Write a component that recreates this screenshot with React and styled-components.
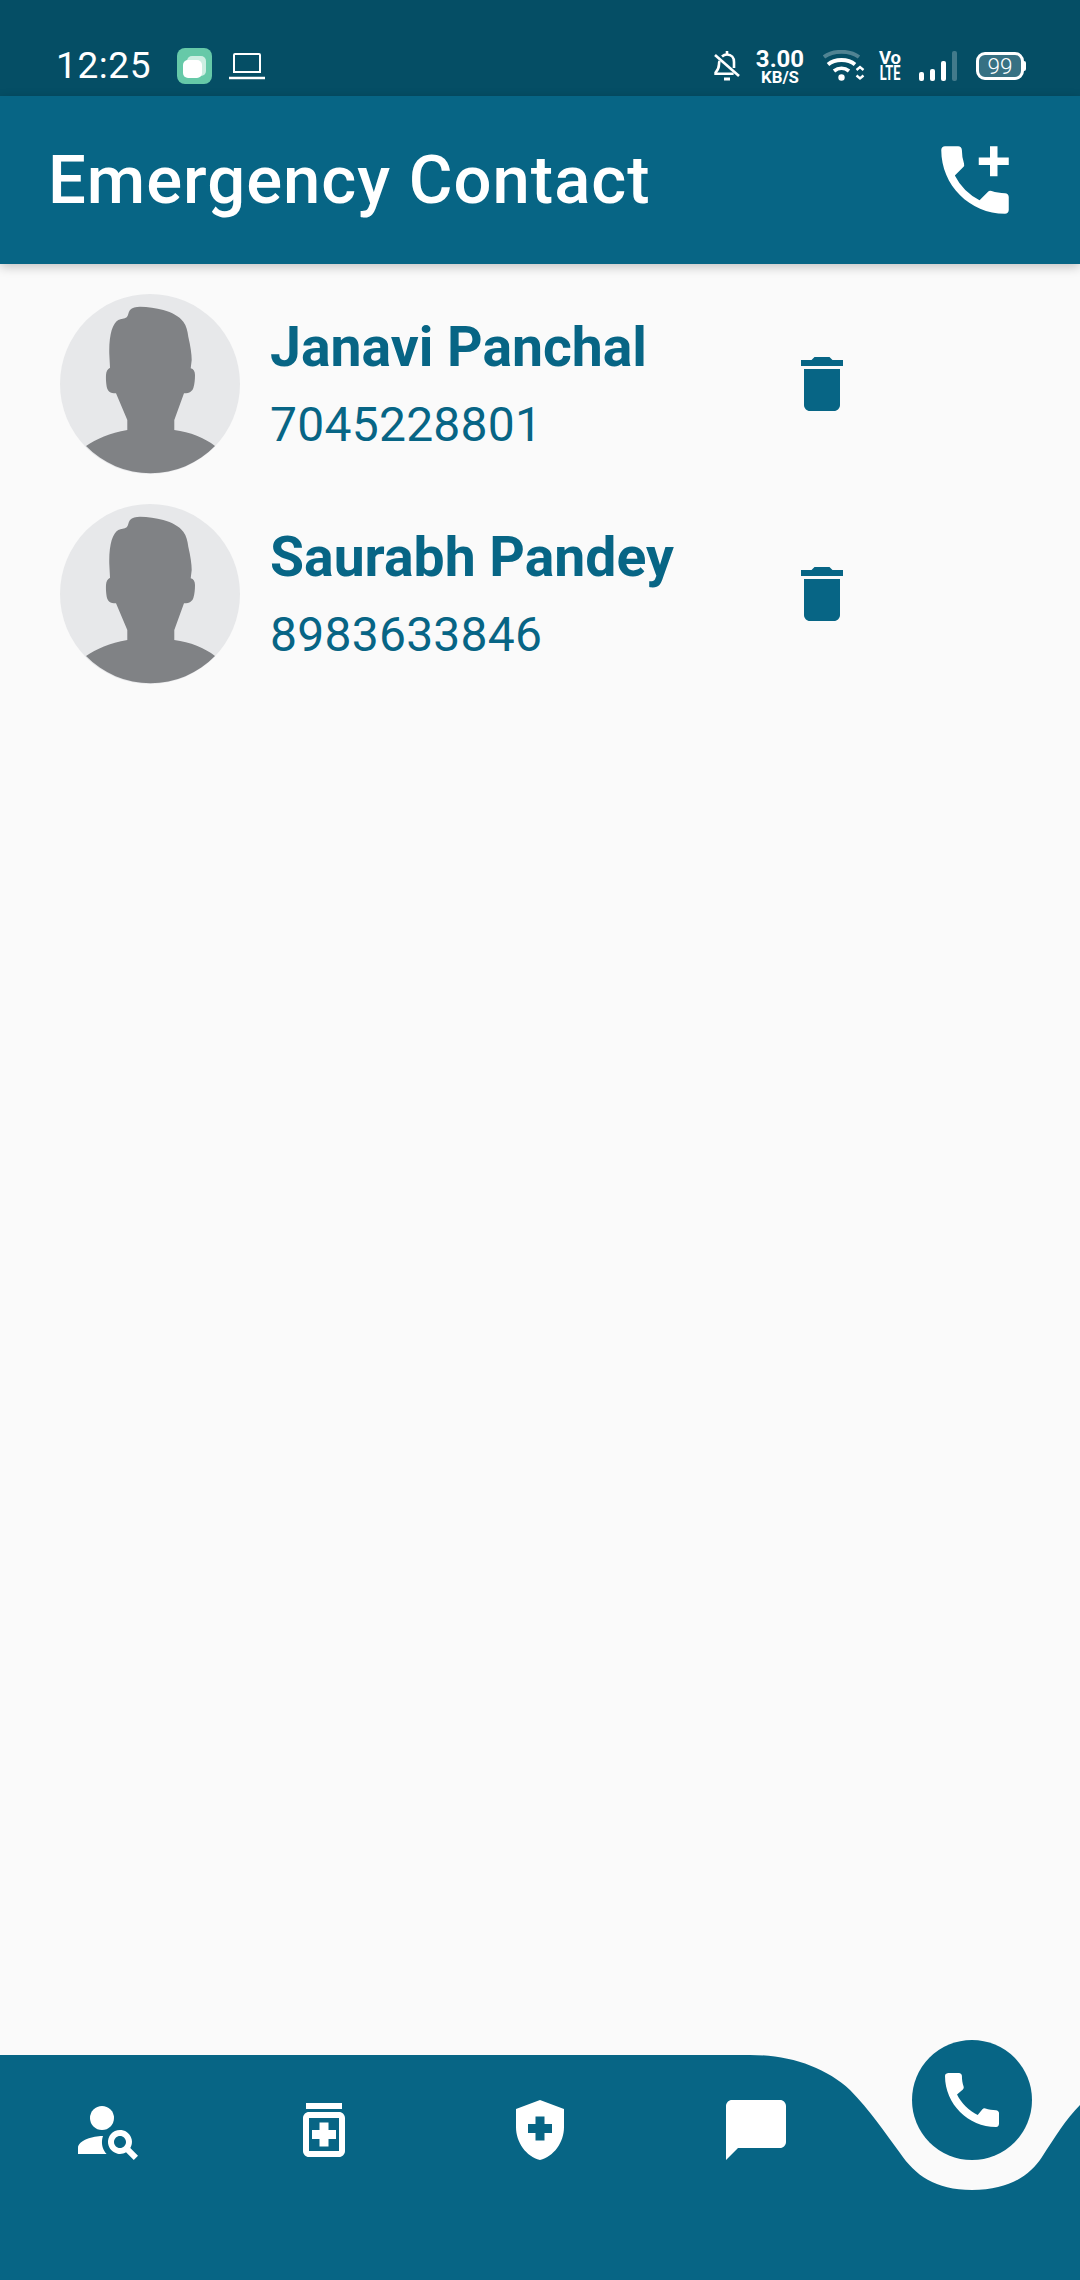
import React from 'react';
import styled, { createGlobalStyle } from 'styled-components';
import {
  MdAddIcCall,
  MdCall,
  MdChatBubble,
  MdDelete,
  MdHealthAndSafety,
  MdOutlineMedication,
} from 'react-icons/md';

const BRAND = '#076585';
const BRAND_DARK = '#054e65';

const GlobalStyle = createGlobalStyle`
  html, body {
    margin: 0;
    padding: 0;
    background: #fafafa;
  }
  * {
    box-sizing: border-box;
  }
`;

const Page = styled.div`
  width: 1080px;
  height: 2280px;
  display: flex;
  flex-direction: column;
  overflow: hidden;
  background: #fafafa;
  font-family: Roboto, "Liberation Sans", sans-serif;
`;

const StatusBar = styled.div`
  height: 96px;
  flex: none;
  display: flex;
  align-items: flex-start;
  justify-content: space-between;
  padding: 48px 56px 0 56px;
  background: ${BRAND_DARK};
  color: #fff;
`;

const StatusGroup = styled.div`
  display: flex;
  align-items: center;
  height: 36px;
`;

const Clock = styled.span`
  font-size: 37px;
  line-height: 38px;
  font-weight: 400;
  width: 121px;
  letter-spacing: 0.6px;
`;

const StatusIcon = styled.svg`
  display: block;
  flex: none;
  margin-left: ${(p) => p.$left || 0}px;
`;

const Speed = styled.div`
  width: 48px;
  margin-left: 16px;
  display: flex;
  flex-direction: column;
  align-items: center;
  font-weight: 700;
`;

const SpeedValue = styled.span`
  font-size: 24px;
  line-height: 22px;
`;

const SpeedUnit = styled.span`
  font-size: 16.8px;
  line-height: 15px;
`;

const Volte = styled.div`
  width: 22px;
  margin-left: 14px;
  display: flex;
  flex-direction: column;
  align-items: center;
  font-weight: 700;
`;

const VolteLine = styled.span`
  font-size: ${(p) => p.$size}px;
  line-height: 15px;
  transform: scaleX(${(p) => p.$squeeze});
`;

const Battery = styled.div`
  position: relative;
  width: 48px;
  height: 28px;
  margin-left: 19px;
  display: flex;
  align-items: center;
  justify-content: center;
  border: 3px solid #fff;
  border-radius: 9px;
  background: rgba(255, 255, 255, 0.2);
  font-size: 22.5px;
  font-weight: 300;
  line-height: 1;

  &::after {
    content: '';
    position: absolute;
    right: -5px;
    top: 6px;
    width: 2px;
    height: 10px;
    border-radius: 0 2px 2px 0;
    background: #fff;
  }
`;

const AppBar = styled.header`
  position: relative;
  z-index: 1;
  height: 168px;
  flex: none;
  display: flex;
  align-items: center;
  justify-content: space-between;
  padding: 0 60px 0 48px;
  background: ${BRAND};
  box-shadow: 0 3px 10px rgba(0, 0, 0, 0.22);
  color: #fff;
`;

const Title = styled.h1`
  margin: 0;
  font-size: 67px;
  line-height: 78px;
  font-weight: 500;
  letter-spacing: 1px;
`;

const ContactList = styled.main`
  flex: 1;
  display: flex;
  flex-direction: column;
  gap: 30px;
  padding: 30px 0 0 60px;
`;

const ContactRow = styled.div`
  display: flex;
  align-items: center;
  height: 180px;
`;

const Avatar = styled.svg`
  display: block;
  flex: none;
  width: 180px;
  height: 180px;
`;

const ContactText = styled.div`
  width: 516px;
  margin-left: 30px;
  display: flex;
  flex-direction: column;
  color: ${BRAND};
`;

const ContactName = styled.span`
  font-size: 55.3px;
  line-height: 66px;
  font-weight: 700;
`;

const ContactPhone = styled.span`
  margin-top: 16px;
  font-size: 48px;
  line-height: 56px;
  font-weight: 400;
  letter-spacing: 0.25px;
`;

const TrashIcon = styled(MdDelete)`
  display: block;
  flex: none;
  color: ${BRAND};
`;

const BottomNav = styled.nav`
  position: relative;
  height: 225px;
  flex: none;
  display: flex;
  align-items: flex-start;
  gap: 144px;
  padding: 39px 0 0 72px;
  color: #fff;
`;

const NavWave = styled.svg`
  position: absolute;
  left: 0;
  top: 0;
  width: 1080px;
  height: 225px;
`;

const NavItem = styled.span`
  position: relative;
  display: block;
  width: 72px;
  height: 72px;
`;

const CallButton = styled.button`
  position: absolute;
  left: 912px;
  top: -15px;
  width: 120px;
  height: 120px;
  padding: 0;
  display: flex;
  align-items: center;
  justify-content: center;
  border: 0;
  border-radius: 50%;
  background: ${BRAND};
  color: #fff;
`;

const contacts = [
  { name: 'Janavi Panchal', phone: '7045228801' },
  { name: 'Saurabh Pandey', phone: '8983633846' },
];

// person_search with the square handle of the reference
const PersonSearchIcon = ({ size }) => (
  <svg width={size} height={size} viewBox="0 0 24 24" fill="currentColor">
    <circle cx="10" cy="8" r="4" />
    <path d="M10.35 14.01C7.62 13.91 2 15.27 2 18v2h9.54c-2.47-2.76-1.23-5.92-1.19-5.99z" />
    <path d="M19.43 18.02c.47-.8.7-1.77.48-2.82-.34-1.64-1.72-2.95-3.38-3.16-2.63-.34-4.85 1.87-4.5 4.5.22 1.66 1.52 3.04 3.16 3.38 1.05.22 2.02-.01 2.82-.48L20.59 22 22 20.59l-2.57-2.57zM16 18c-1.1 0-2-.9-2-2s.9-2 2-2 2 .9 2 2-.9 2-2 2z" />
  </svg>
);

const navIcons = [PersonSearchIcon, MdOutlineMedication, MdHealthAndSafety, MdChatBubble];

const AppBadge = () => (
  <StatusIcon width="35" height="36" viewBox="0 0 35 36">
    <rect width="35" height="36" rx="8" fill="#66c9a8" />
    <rect x="10" y="8" width="19" height="20" rx="5" fill="#cdeee2" />
    <rect x="6" y="12" width="19" height="18" rx="5" fill="#fff" />
  </StatusIcon>
);

const LaptopIcon = () => (
  <StatusIcon width="36" height="28" viewBox="0 0 36 28" $left={17} fill="none" stroke="#fff" strokeWidth="2">
    <path d="M5 21V3a1 1 0 0 1 1-1h24a1 1 0 0 1 1 1v18" />
    <path d="M5 20h26" />
    <path d="M0 26h36" strokeWidth="2.6" />
  </StatusIcon>
);

const BellOffIcon = () => (
  <StatusIcon width="26" height="32" viewBox="0 0 26 32" fill="none" stroke="#fff" strokeWidth="2.6">
    <path d="M8 6.500c1.400-1.300 3-2 5-2 4.500 0 7 3.400 7 7.500v6" />
    <path d="M5.600 11c-.4 1-.6 2-.6 3.200 0 3.800-1.600 6.300-3.400 8.300v1.300h18" />
    <path d="M1 5l24 21" />
    <path d="M13 1v3" />
    <path d="M10 29h6" strokeWidth="3" />
  </StatusIcon>
);

const WifiIcon = () => (
  <StatusIcon width="42" height="32" viewBox="0 0 42 32" $left={19} fill="none" stroke="#fff" strokeWidth="3.8">
    <path d="M1 7C10 0 27 0 36 7" strokeOpacity=".3" />
    <path d="M5 14.500c7-6 20-6 27 0" />
    <path d="M11 21c4.500-3.500 10.500-3.500 15 0" />
    <circle cx="18.500" cy="27.500" r="3.200" fill="#fff" stroke="none" />
    <path d="M33.500 20l3.500-3 3.500 3M33.500 25.500l3.500 3 3.500-3" strokeWidth="2.400" />
  </StatusIcon>
);

const SignalIcon = () => (
  <StatusIcon width="38" height="31" viewBox="0 0 38 31" $left={18} fill="#fff">
    <rect x="0" y="21" width="5" height="9" rx="2" />
    <rect x="11" y="18" width="5" height="12" rx="2" />
    <rect x="22" y="10" width="5" height="20" rx="2" />
    <rect x="33" y="0" width="5" height="30" rx="2" fillOpacity=".25" />
  </StatusIcon>
);

// silhouette traced from the placeholder picture
const AvatarPicture = () => (
  <Avatar viewBox="0 0 180 180">
    <circle cx="90" cy="90" r="90" fill="#e7e8ea" />
    <path
      fill="#808285"
      d="M80 12.700C88 12.700 96 14 103.300 16C112 18.500 119 22 123.300 27.700C126.500 32 127.500 37 128.300 42.700C130.500 52 131.700 60 131.700 66L130.700 74.300C133.500 75 135 77.500 135 81C135 86 134.500 90 133.500 93.500C132.500 97 130 99.300 124 99.300L114.300 126V136C130 138 145 144 155 152A90 90 0 0 1 26 152C36 145 50 139 67.300 136V126L56 99.300C50 99.300 47.500 97 46.700 92.700C46 88 45.800 85 46 81C46.200 77.500 47.500 75 50 73.700L49.300 60C49 50 50 42 51.700 36C53.500 31 55.500 27.500 58.300 26C61 24.500 64.500 25 66.700 23.300C68.500 21.500 68 18.500 70 16C72 13.700 76 12.700 80 12.700Z"
    />
  </Avatar>
);

export default function App() {
  return (
    <Page>
      <GlobalStyle />
      <StatusBar>
        <StatusGroup>
          <Clock>12:25</Clock>
          <AppBadge />
          <LaptopIcon />
        </StatusGroup>
        <StatusGroup>
          <BellOffIcon />
          <Speed>
            <SpeedValue>3.00</SpeedValue>
            <SpeedUnit>KB/S</SpeedUnit>
          </Speed>
          <WifiIcon />
          <Volte>
            <VolteLine $size={18.5} $squeeze={1}>Vo</VolteLine>
            <VolteLine $size={20} $squeeze={0.64}>LTE</VolteLine>
          </Volte>
          <SignalIcon />
          <Battery>99</Battery>
        </StatusGroup>
      </StatusBar>

      <AppBar>
        <Title>Emergency Contact</Title>
        <MdAddIcCall size={90} />
      </AppBar>

      <ContactList>
        {contacts.map((contact) => (
          <ContactRow key={contact.phone}>
            <AvatarPicture />
            <ContactText>
              <ContactName>{contact.name}</ContactName>
              <ContactPhone>{contact.phone}</ContactPhone>
            </ContactText>
            <TrashIcon size={72} />
          </ContactRow>
        ))}
      </ContactList>

      <BottomNav>
        <NavWave viewBox="0 0 1080 225">
          <path
            fill={BRAND}
            d="M0 0H750C790 0 825 12 850 35C870 55 885 78 900 98C915 120 935 135 972 135C1010 135 1030 120 1042 102C1055 82 1066 64 1080 50V225H0Z"
          />
        </NavWave>
        {navIcons.map((Icon, i) => (
          <NavItem key={i}>
            <Icon size={72} />
          </NavItem>
        ))}
        <CallButton>
          <MdCall size={72} />
        </CallButton>
      </BottomNav>
    </Page>
  );
}
